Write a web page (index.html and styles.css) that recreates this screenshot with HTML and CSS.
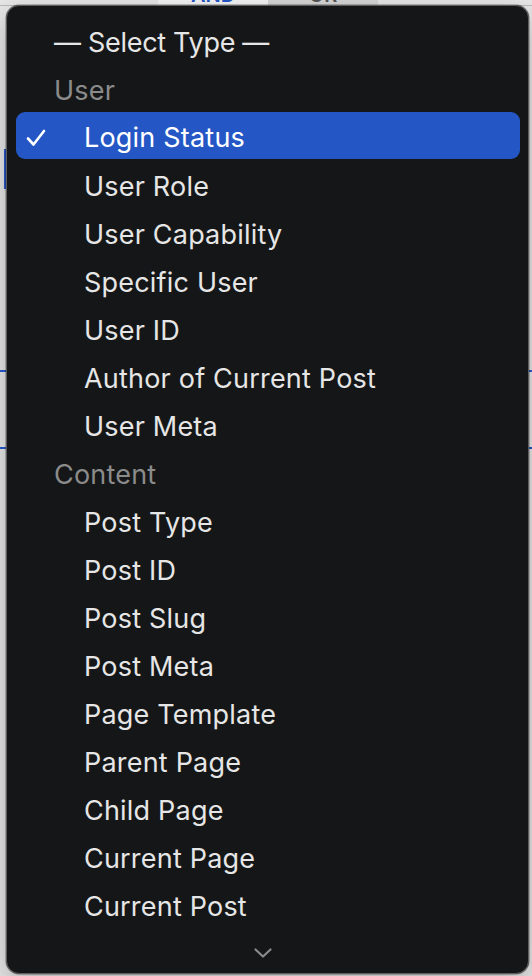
FILE: index.html
```html
<!DOCTYPE html>
<html lang="en">
<head>
  <meta charset="UTF-8" />
  <meta name="viewport" content="width=device-width, initial-scale=1.0"/>
  <title>Select Type</title>
  <link rel="stylesheet" href="styles.css">
</head>
<body>
  <div class="page">
    <div class="toolbar">
      <div class="segment active">AND</div>
      <div class="segment">OR</div>
    </div>
    <div class="field-edge"></div>
    <div class="rule rule-a"></div>
    <div class="rule rule-b"></div>
  </div>

  <div class="menu">
    <div class="menu-list">
      <div class="option placeholder">— Select Type —</div>

      <div class="group">User</div>
      <div class="option selected">
        <svg class="check" viewBox="0 0 20 18" width="20" height="18">
          <path d="M2 9.5 L7.5 15.5 L18 2" fill="none" stroke="#fff" stroke-width="2.6" stroke-linecap="round" stroke-linejoin="round"/>
        </svg>
        Login Status
      </div>
      <div class="option">User Role</div>
      <div class="option">User Capability</div>
      <div class="option">Specific User</div>
      <div class="option">User ID</div>
      <div class="option">Author of Current Post</div>
      <div class="option">User Meta</div>

      <div class="group">Content</div>
      <div class="option">Post Type</div>
      <div class="option">Post ID</div>
      <div class="option">Post Slug</div>
      <div class="option">Post Meta</div>
      <div class="option">Page Template</div>
      <div class="option">Parent Page</div>
      <div class="option">Child Page</div>
      <div class="option">Current Page</div>
      <div class="option">Current Post</div>
    </div>
    <div class="more">
      <svg viewBox="0 0 18 10" width="18" height="10">
        <path d="M1.5 1.5 L9 8.5 L16.5 1.5" fill="none" stroke="#8a8a8a" stroke-width="2.2" stroke-linecap="round" stroke-linejoin="round"/>
      </svg>
    </div>
  </div>
</body>
</html>
```

FILE: styles.css
```css
* {
  margin: 0;
  padding: 0;
  box-sizing: border-box;
}

body {
  background: #e7e7e7;
  font-family: Inter, 'Noto Sans', sans-serif;
  width: 532px;
  height: 976px;
  overflow: hidden;
  position: relative;
}

/* page behind the popup */
.page {
  height: 976px;
}

.toolbar {
  display: flex;
  height: 6px;
  overflow: hidden;
  padding-left: 158px;
  border-bottom: 1px solid #b9b9b9;
}

.segment {
  width: 110px;
  height: 22px;
  margin-top: -16px;
  line-height: 22px;
  text-align: center;
  font-size: 20px;
  font-weight: 600;
  color: #555;
  background: #d6d6d6;
}

.segment.active {
  background: #f4f4f4;
  color: #2456c6;
}

.field-edge {
  width: 2px;
  height: 40px;
  margin: 143px 0 0 4px;
  background: #2a5bd0;
}

.rule {
  height: 2px;
  background: #2a5bd0;
}

.rule-a {
  margin-top: 181px;
}

.rule-b {
  margin-top: 75px;
}

/* the popup */
.menu {
  position: absolute;
  left: 6px;
  top: 5px;
  width: 523px;
  height: 969px;
  background: #151617;
  border: 1.5px solid #5e5e5e;
  border-radius: 13px;
  box-shadow: 0 0 0 0.5px rgba(0, 0, 0, 0.45), 0 10px 30px rgba(0, 0, 0, 0.25);
  display: flex;
  flex-direction: column;
  overflow: hidden;
}

.menu-list {
  padding: 12.5px 8px 0 9px;
}

.option,
.group {
  position: relative;
  height: 48px;
  line-height: 48px;
  font-size: 27px;
  letter-spacing: 0.2px;
  color: #e6e6e6;
  padding-left: 68px;
  white-space: nowrap;
}

.option.placeholder,
.group {
  padding-left: 38px;
}

.option.placeholder {
  letter-spacing: -0.3px;
}

.group {
  color: #8b8b8b;
}

.option.selected {
  height: 47px;
  margin: -2.5px 0 3.5px;
  padding-top: 5px;
  line-height: 42px;
  background: #2456c6;
  color: #fff;
  border-radius: 9px;
}

.check {
  position: absolute;
  left: 10px;
  top: 17px;
}

.more {
  display: flex;
  justify-content: center;
  padding-top: 17px;
  padding-right: 10px;
}
```
